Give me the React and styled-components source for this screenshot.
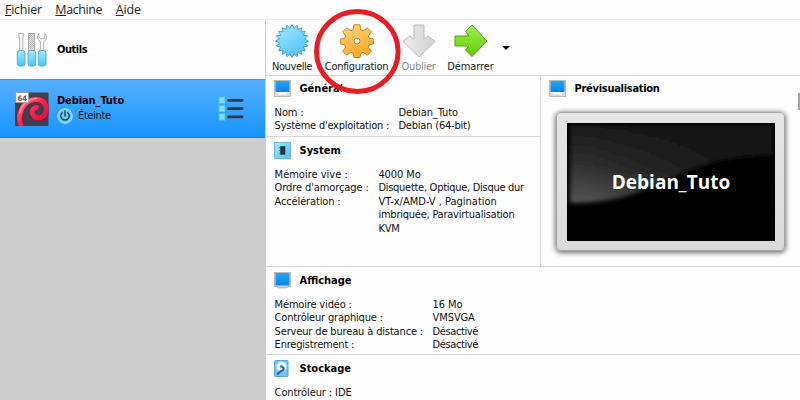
import React from 'react';
import styled, { createGlobalStyle, css } from 'styled-components';

const Global = createGlobalStyle`
  * { box-sizing: border-box; }
  html, body { margin: 0; padding: 0; overflow: hidden; }
  body {
    background: #fff;
    color: #111;
    font-family: "DejaVu Sans Condensed", "DejaVu Sans", Tahoma, sans-serif;
    font-stretch: condensed;
    font-size: 11px;
  }
`;

const Window = styled.div`
  position: relative;
  width: 800px;
  height: 400px;
  overflow: hidden;
  display: grid;
  grid-template-rows: 20px 380px;
  background: #fefefe;
`;

const MenuBar = styled.nav`
  display: flex;
  gap: 13.5px;
  padding-left: 5px;
  border-bottom: 1px solid #f0f0f0;
  font-family: "Open Sans", "Noto Sans", sans-serif;
  font-stretch: normal;
  font-size: 12.5px;
  line-height: 20px;
  color: #222;
  white-space: nowrap;
`;

const MenuItem = styled.span`
  letter-spacing: ${(p) => p.$ls || 0}px;
  &::first-letter { text-decoration: underline; }
`;

const Body = styled.div`
  display: grid;
  grid-template-columns: 266px 534px;
  min-height: 0;
`;

const Sidebar = styled.aside`
  display: flex;
  flex-direction: column;
  background: #cdcdcd;
  border-right: 1px solid #cfcfcf;
`;

const ToolsRow = styled.div`
  display: flex;
  align-items: center;
  height: 59px;
  padding: 0 0 0 16px;
  background: #fefefe;
  gap: 9px;
`;

const MachineRow = styled.div`
  display: flex;
  align-items: center;
  height: 59px;
  padding: 0 21px 0 15px;
  gap: 8px;
  border-top: 1px solid #5d93c4;
  border-bottom: 1px solid #1581dc;
  background: linear-gradient(#55b0ff, #1795ff);
`;

const MachineText = styled.div`
  flex: 1;
  display: flex;
  flex-direction: column;
  gap: 1px;
`;

const Status = styled.div`
  display: flex;
  align-items: center;
  height: 16px;
  gap: 5px;
  margin-top: -1px;
`;

const Bold = styled.b`
  color: #000;
  line-height: 14px;
  white-space: nowrap;
  letter-spacing: ${(p) => p.$ls || 0}px;
`;

const Text = styled.span`
  white-space: nowrap;
  letter-spacing: ${(p) => p.$ls || 0}px;
`;

const Main = styled.main`
  display: grid;
  grid-template-rows: 56px 191px 88px 45px;
  min-width: 0;
`;

const Toolbar = styled.div`
  display: flex;
  border-bottom: 1px solid #d4d4d4;
`;

const ToolButton = styled.div`
  display: flex;
  flex-direction: column;
  align-items: center;
  width: ${(p) => p.$w}px;
  padding-top: 3px;
  color: ${(p) => (p.$off ? '#8b8b8b' : '#222')};
  line-height: 14px;
  svg { margin-bottom: 1px; }
`;

const DropArrow = styled.i`
  margin: 26px 0 0 3px;
  width: 0;
  height: 0;
  border: 4.5px solid transparent;
  border-top-color: #000;
  border-bottom: 0;
`;

const Upper = styled.div`
  display: grid;
  grid-template-columns: 275px 259px;
  border-bottom: 1px solid #d4d4d4;
`;

const UpperLeft = styled.div`
  display: grid;
  grid-template-rows: 61px 129px;
  border-right: 1px solid #d8d8d8;
`;

const Panel = styled.section`
  padding: ${(p) => p.$top || 4}px 0 0 8px;
  ${(p) => p.$line && css`border-bottom: 1px solid #d8d8d8;`}
`;

const Heading = styled.header`
  display: flex;
  align-items: center;
  height: 17px;
  gap: 8.5px;
`;

const Details = styled.div`
  display: grid;
  grid-template-columns: ${(p) => p.$col}px auto;
  margin-top: ${(p) => p.$gap || 9}px;
  padding-left: 0.6px;
  line-height: 13.4px;
`;

const Monitor = styled.div`
  width: 229px;
  height: 139px;
  margin: 15px 0 0 7px;
  padding: 10px;
  border: 1px solid #a5a5a5;
  border-radius: 5px;
  background: linear-gradient(#e6e6e6, #dadada);
  box-shadow: 0 1px 5px 1px rgba(0, 0, 0, 0.55);
`;

const Screen = styled.div`
  position: relative;
  width: 208px;
  height: 118px;
  overflow: hidden;
  background: #000;
  display: flex;
  align-items: center;
  justify-content: center;
`;

const Gloss = styled.svg`
  position: absolute;
  inset: 0;
`;

const ScreenTitle = styled.strong`
  position: relative;
  color: #fff;
  font-family: "Open Sans", "Noto Sans", sans-serif;
  font-stretch: normal;
  font-size: 19px;
  line-height: 22px;
  margin-bottom: 1px;
  letter-spacing: ${(p) => p.$ls || 0}px;
`;

const ScrollThumb = styled.i`
  position: absolute;
  right: 0;
  top: 93px;
  width: 2px;
  height: 17px;
  background: #a5a5a5;
`;

const Ring = styled.svg`
  position: absolute;
  left: 312px;
  top: 7px;
`;

const ToolsIcon = () => (
  <svg width="32" height="36" viewBox="0 0 32 36">
    <defs>
      <linearGradient id="handle" x2="0" y2="1"><stop stopColor="#a9eaff" /><stop offset="1" stopColor="#45c5fa" /></linearGradient>
      <pattern id="file" width="2" height="2" patternUnits="userSpaceOnUse"><rect width="2" height="2" fill="#dedede" /><rect width="1" height="1" fill="#bbb" /><rect x="1" y="1" width="1" height="1" fill="#bbb" /></pattern>
    </defs>
    <g fill="#f7f7f7" stroke="#a8a8a8" strokeWidth=".9">
      <path d="M2.500 1.500h5L6.800 7v12H3.600V7z" />
      <rect x="12.500" y="1.500" width="6" height="18" fill="url(#file)" />
      <path d="M23 1.500C20.500 4 21 8 24.300 9.500V19h3.500V9.500C31 8 31.500 4 29 1.500V5l-1.500 1.700h-3L23 5z" />
    </g>
    <g fill="url(#handle)" stroke="#46a6d4" strokeWidth=".9">
      <rect x="1.300" y="18.500" width="7.700" height="15.500" rx="2.500" />
      <rect x="12" y="18.500" width="7.700" height="15.500" rx="2.500" />
      <rect x="22.300" y="18.500" width="7.700" height="15.500" rx="2.500" />
    </g>
  </svg>
);

const DebianIcon = () => (
  <svg width="34" height="34" viewBox="0 0 34 34">
    <defs><linearGradient id="swirl" x2="1" y2="1"><stop stopColor="#ff7890" /><stop offset=".45" stopColor="#f4274f" /><stop offset="1" stopColor="#d00c36" /></linearGradient></defs>
    <rect y=".5" width="33.500" height="33.500" rx="1" fill="#3d414d" />
    <svg x="0" y=".5" width="33.500" height="33.500" viewBox="0 0 33.500 33.500">
      <path d="M7.500 34C4.500 30 4.500 24 5.500 20C8 11 15 6.500 22 7C30 7.500 33.500 15 31 21C28.500 27 20 27.500 17.500 22C16 17.500 19.500 14 23.500 15.500" fill="none" stroke="#a60b2d" strokeWidth="6" />
      <path d="M7 34C4 30 4 24 5.500 20C8 11 15 6.500 22 7C30 7.500 33 15 30.500 20.500C28 26.500 20 27 17.500 21.500C16 17.500 19.500 14 23.500 15.500" fill="none" stroke="url(#swirl)" strokeWidth="4.800" />
      <path d="M4.500 21C7 11 14 6 22 6" fill="none" stroke="#ff9cad" strokeWidth="1.200" />
    </svg>
    <rect x=".5" y=".5" width="13" height="10" fill="#fff" stroke="#999" strokeWidth=".7" />
    <text x="2.500" y="8.500" fontSize="7.500" fontWeight="bold" fill="#555" textLength="9.500" lengthAdjust="spacingAndGlyphs">64</text>
  </svg>
);

const PowerIcon = () => (
  <svg width="16" height="16" viewBox="0 0 16 16">
    <circle cx="8" cy="8" r="7.300" fill="#6dccf7" stroke="#a5e6ff" />
    <path d="M5.200 4.700a4.200 4.200 0 1 0 5.600 0M8 3v5" fill="none" stroke="#17476b" strokeWidth="1.500" strokeLinecap="round" />
  </svg>
);

const ListIcon = () => (
  <svg width="26" height="26" viewBox="0 0 26 26">
    {[1, 9.3, 17.6].map((y) => (
      <g key={y}>
        <rect x="1" y={y} width="6" height="6.500" fill="#83ddfd" stroke="#4dbdf4" strokeWidth=".8" />
        <path d={`M10.500 ${y + 3.3}h13.500`} stroke="#303943" strokeWidth="2.800" strokeLinecap="round" />
      </g>
    ))}
  </svg>
);

const points = (n, outer, inner) =>
  Array.from({ length: n * 2 }, (_, i) => {
    const a = (i * Math.PI) / n - Math.PI / 2;
    const r = i % 2 ? inner : outer;
    return `${(17 + r * Math.cos(a)).toFixed(2)},${(17 + r * Math.sin(a)).toFixed(2)}`;
  }).join(' ');

const NewIcon = () => (
  <svg width="34" height="36" viewBox="0 0 34 34">
    <defs><linearGradient id="burst" x2=".6" y2="1"><stop stopColor="#a5ecff" /><stop offset="1" stopColor="#55c4f8" /></linearGradient></defs>
    <polygon points={points(20, 16.5, 12.8)} fill="url(#burst)" stroke="#3998cf" strokeWidth=".9" />
  </svg>
);

const GearIcon = () => (
  <svg width="34" height="36" viewBox="0 0 34 34">
    <defs><linearGradient id="gear" x2=".4" y2="1"><stop stopColor="#ffda83" /><stop offset="1" stopColor="#ffa929" /></linearGradient></defs>
    <path fill="url(#gear)" fillRule="evenodd" stroke="#cd8328" strokeLinejoin="round" d="M14 .8h6l.8 5 2.400 1 4.200-3 4 4-3 4.200 1 2.300 4.100.7v5l-4.100.8-1 2.300 3 4.200-4 4-4.200-3-2.400 1-.8 4.200h-6l-.8-4.200-2.400-1-4.200 3-4-4 3-4.200-1-2.300-4.100-.8v-5l4.100-.7 1-2.300-3-4.200 4-4 4.200 3 2.400-1zM17 14a3 3 0 1 0 0 6 3 3 0 0 0 0-6z" />
  </svg>
);

const ArrowIcon = ({ down }) => (
  <svg width="34" height="36" viewBox="0 0 34 34">
    <defs>
      <linearGradient id="go" x2="0" y2="1"><stop stopColor="#a4f04c" /><stop offset="1" stopColor="#56cf00" /></linearGradient>
      <linearGradient id="drop" x2="1" y2="0"><stop stopColor="#ececec" /><stop offset="1" stopColor="#d2d2d2" /></linearGradient>
    </defs>
    {down
      ? <path d="M12 1h10v14.500l4-3.500 7 5.500L17 33 1 17.500 8 12l4 3.500z" fill="url(#drop)" stroke="#bdbdbd" strokeLinejoin="round" />
      : <path d="M1 12h14L11.500 7.500 18 1l15 16L18 32.500 11.500 26l3.500-4H1z" fill="url(#go)" stroke="#549b27" strokeLinejoin="round" />}
  </svg>
);

const ScreenIcon = ({ stand }) => (
  <svg width="17" height="17" viewBox="0 0 17 17">
    <defs><linearGradient id="scr" x2="0" y2="1"><stop stopColor="#25a5ee" /><stop offset="1" stopColor="#0a84ee" /></linearGradient></defs>
    <rect x=".5" y=".5" width="16" height={stand ? 14 : 16} fill="#dcdcdc" stroke="#b8b8b8" />
    <rect x="1.500" y="1" width="14" height={stand ? 12.5 : 11} fill="url(#scr)" />
    {stand
      ? <path d="M3 14.300l1 1.500h9l1-1.500" fill="#ddd" stroke="#aaa" />
      : <path d="M2 12.500h13M4 13l1 1h7l1-1" fill="#fff" stroke="#fff" strokeWidth="1.200" />}
  </svg>
);

const ChipIcon = () => (
  <svg width="17" height="17" viewBox="0 0 17 17">
    <defs><linearGradient id="chip" x2="1" y2="1"><stop stopColor="#a0e8ff" /><stop offset="1" stopColor="#50c3f6" /></linearGradient></defs>
    <rect x=".5" y=".5" width="16" height="16" fill="url(#chip)" stroke="#6fb8dd" />
    <rect x="6.200" y="4.200" width="5" height="8.500" fill="#28333d" />
    <path d="M5.200 5.500h1M5.200 8.500h1M5.200 11.500h1M11.200 5.500h1M11.200 8.500h1M11.200 11.500h1" stroke="#53798d" />
  </svg>
);

const DiskIcon = () => (
  <svg width="17" height="17" viewBox="0 0 17 17">
    <rect x=".5" y=".5" width="13.500" height="16" rx="1" fill="#70c5f3" stroke="#55a6d7" />
    <circle cx="7.500" cy="6.800" r="5.300" fill="#e6f6ff" stroke="#9bcce8" strokeWidth=".7" />
    <path d="M8 7c2.500 0 2.500 3.500-1.500 4.500l-3 2.500" fill="none" stroke="#1769b2" strokeWidth="2" strokeLinecap="round" />
    <circle cx="7.300" cy="6.500" r="1.400" fill="#398bcd" />
  </svg>
);

const Rows = ({ col, gap, rows }) => (
  <Details $col={col} $gap={gap}>
    {rows.map(([label, value, a, b], i) => (
      <React.Fragment key={i}>
        <Text $ls={a}>{label}</Text>
        <Text $ls={b}>{value}</Text>
      </React.Fragment>
    ))}
  </Details>
);

export default function App() {
  return (
    <>
      <Global />
      <Window>
        <MenuBar>
          <MenuItem $ls={-0.25}>Fichier</MenuItem>
          <MenuItem $ls={-0.4}>Machine</MenuItem>
          <MenuItem $ls={-0.1}>Aide</MenuItem>
        </MenuBar>
        <Body>
          <Sidebar>
            <ToolsRow><ToolsIcon /><Bold $ls={-0.45}>Outils</Bold></ToolsRow>
            <MachineRow>
              <DebianIcon />
              <MachineText>
                <Bold $ls={-0.1}>Debian_Tuto</Bold>
                <Status><PowerIcon /><Text $ls={-0.35}>Éteinte</Text></Status>
              </MachineText>
              <ListIcon />
            </MachineRow>
          </Sidebar>
          <Main>
            <Toolbar>
              <ToolButton $w={52}><NewIcon /><Text $ls={-0.4}>Nouvelle</Text></ToolButton>
              <ToolButton $w={77}><GearIcon /><Text $ls={-0.28}>Configuration</Text></ToolButton>
              <ToolButton $w={47} $off><ArrowIcon down /><Text $ls={-0.3}>Oublier</Text></ToolButton>
              <ToolButton $w={57}><ArrowIcon /><Text $ls={-0.1}>Démarrer</Text></ToolButton>
              <DropArrow />
            </Toolbar>
            <Upper>
              <UpperLeft>
                <Panel $line>
                  <Heading><ScreenIcon /><Bold>Général</Bold></Heading>
                  <Rows
                    col={123.8}
                    rows={[
                      ['Nom :', 'Debian_Tuto', -0.1, -0.1],
                      ["Système d'exploitation :", 'Debian (64-bit)', -0.23, -0.2],
                    ]}
                  />
                </Panel>
                <Panel $top={5}>
                  <Heading><ChipIcon /><Bold>System</Bold></Heading>
                  <Rows
                    col={103.8}
                    rows={[
                      ['Mémoire vive :', '4000 Mo', 0, -0.1],
                      ["Ordre d'amorçage :", 'Disquette, Optique, Disque dur', -0.1, -0.28],
                      ['Accélération :', 'VT-x/AMD-V , Pagination', -0.15, 0],
                      ['', 'imbriquée, Paravirtualisation', 0, -0.23],
                      ['', 'KVM', 0, -0.2],
                    ]}
                  />
                </Panel>
              </UpperLeft>
              <Panel>
                <Heading><ScreenIcon /><Bold $ls={-0.28}>Prévisualisation</Bold></Heading>
                <Monitor>
                  <Screen>
                    <Gloss width="208" height="118" viewBox="0 0 208 118">
                      <defs>
                        <linearGradient id="gloss" x1=".25" y1="0" x2="0" y2="1"><stop stopColor="#181818" /><stop offset=".5" stopColor="#2d2d2d" /><stop offset="1" stopColor="#555" /></linearGradient>
                        <linearGradient id="fade"><stop offset=".1" stopColor="#151515" stopOpacity="0" /><stop offset="1" stopColor="#121212" /></linearGradient>
                        <filter id="soft"><feGaussianBlur stdDeviation="2.200" /></filter>
                      </defs>
                      <g filter="url(#soft)">
                        <path d="M3 2H206V32C150 34 130 44 98 58C66 73 42 80 3 80z" fill="url(#gloss)" />
                        <path d="M3 2H206V32C150 34 130 44 98 58C66 73 42 80 3 80z" fill="url(#fade)" />
                      </g>
                    </Gloss>
                    <ScreenTitle>Debian_Tuto</ScreenTitle>
                  </Screen>
                </Monitor>
              </Panel>
            </Upper>
            <Panel $line $top={5}>
              <Heading><ScreenIcon stand /><Bold>Affichage</Bold></Heading>
              <Rows
                col={158}
                rows={[
                  ['Mémoire vidéo :', '16 Mo', -0.17, -0.1],
                  ['Contrôleur graphique :', 'VMSVGA', -0.18, -0.1],
                  ['Serveur de bureau à distance :', 'Désactivé', -0.15, -0.4],
                  ['Enregistrement :', 'Désactivé', -0.2, -0.4],
                ]}
              />
            </Panel>
            <Panel $top={5}>
              <Heading><DiskIcon /><Bold>Stockage</Bold></Heading>
              <Rows col={124} rows={[['Contrôleur : IDE', '', -0.1]]} />
            </Panel>
          </Main>
        </Body>
        <ScrollThumb />
        <Ring width="91" height="90" viewBox="0 0 91 90">
          <ellipse cx="45.300" cy="44.500" rx="40.800" ry="40" fill="none" stroke="#eb1c24" strokeWidth="5" />
        </Ring>
      </Window>
    </>
  );
}
